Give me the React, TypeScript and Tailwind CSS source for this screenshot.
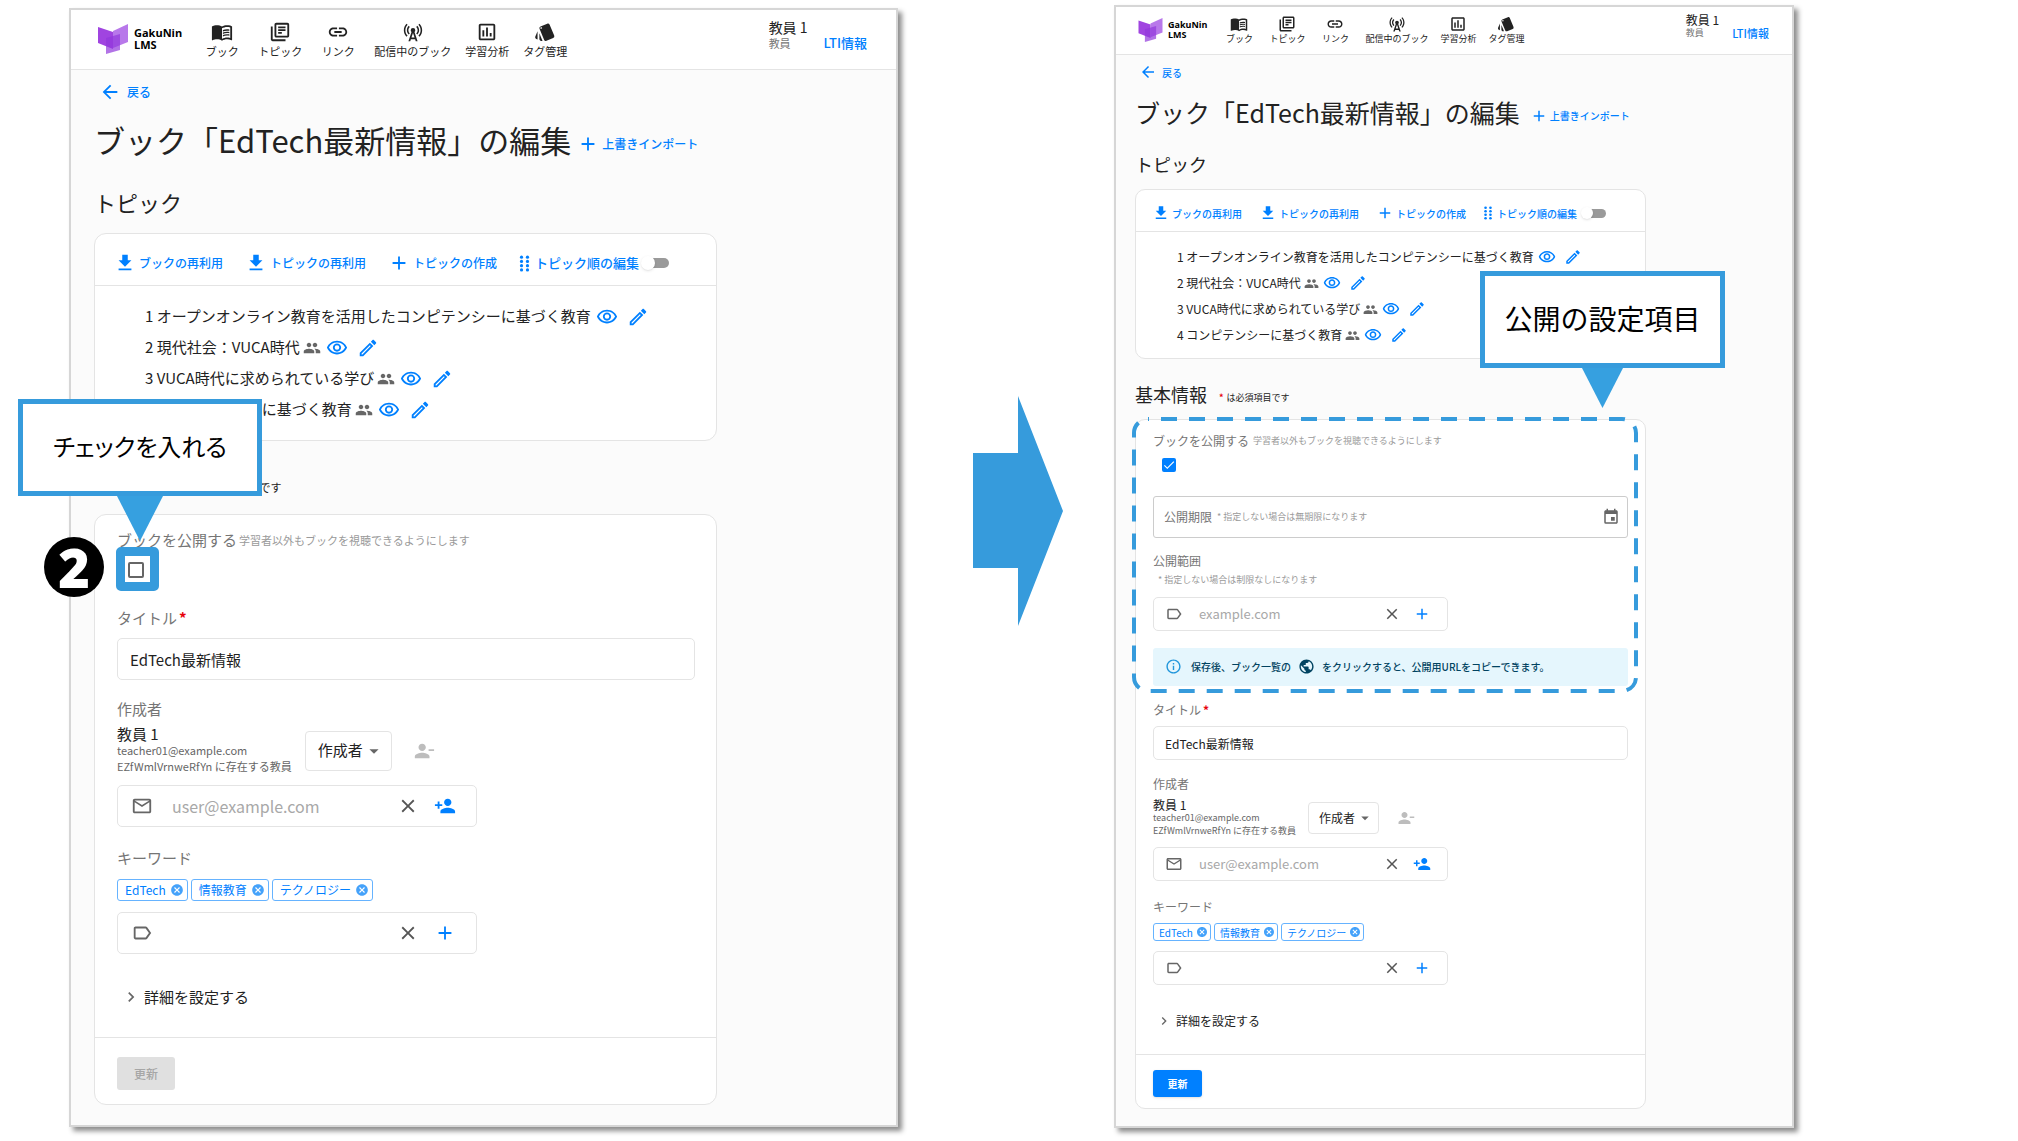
import { useId, type ComponentType, type ReactNode } from 'react';
import clsx from 'clsx';
import {
    MdAdd,
    MdArrowBack,
    MdArrowDropDown,
    MdCancel,
    MdCellTower,
    MdCheck,
    MdChevronRight,
    MdClose,
    MdDownload,
    MdEvent,
    MdInfoOutline,
    MdLabelOutline,
    MdLink,
    MdMailOutline,
    MdMenuBook,
    MdOutlineAssessment,
    MdOutlineEdit,
    MdOutlineLibraryBooks,
    MdOutlineVisibility,
    MdPeople,
    MdPersonAdd,
    MdPersonRemove,
    MdPublic,
    MdStyle,
} from 'react-icons/md';

type IconType = ComponentType<{ className?: string }>;
type Sized = { sm?: boolean };

const NAV: { label: string; icon: IconType }[] = [
    { label: 'ブック', icon: MdMenuBook },
    { label: 'トピック', icon: MdOutlineLibraryBooks },
    { label: 'リンク', icon: MdLink },
    { label: '配信中のブック', icon: MdCellTower },
    { label: '学習分析', icon: MdOutlineAssessment },
    { label: 'タグ管理', icon: MdStyle },
];

const TOPICS = [
    { title: '1 オープンオンライン教育を活用したコンピテンシーに基づく教育', shared: false },
    { title: '2 現代社会：VUCA時代', shared: true },
    { title: '3 VUCA時代に求められている学び', shared: true },
    { title: '4 コンピテンシーに基づく教育', shared: true },
];

const KEYWORDS = ['EdTech', '情報教育', 'テクノロジー'];

function Logo({ sm }: Sized) {
    return (
        <a href="#" className={clsx('flex items-center', sm ? 'gap-[5px]' : 'gap-[6px]')}>
            <svg viewBox="0 0 30 30" className={sm ? 'w-[25px] h-[24px]' : 'w-[30px] h-[30px]'} aria-hidden="true">
                <path d="M30 0 L15 7 V24 L30 18 Z" fill="#b878ea" />
                <path d="M0 3 L15 8 V25 L0 19 Z" fill="#a044e0" />
                <path d="M8 14 L22 10 V26 L8 30 Z" fill="#9238dc" fillOpacity="0.7" />
            </svg>
            <span
                className={clsx(
                    "font-['Open_Sans',sans-serif] font-bold text-black",
                    sm ? 'text-[9px] leading-[10px]' : 'text-[11px] leading-[12px]',
                )}
            >
                GakuNin
                <br />
                LMS
            </span>
        </a>
    );
}

function Header({ sm }: Sized) {
    return (
        <header
            className={clsx(
                'flex bg-white border-b border-[#e4e4e4]',
                sm ? 'h-[48px] pl-[22px] pr-[23px] pb-px' : 'h-[60px] pl-[27px] pr-[29px] pb-px',
            )}
        >
            <Logo sm={sm} />
            <nav className={clsx('flex items-center', sm ? 'ml-2' : 'ml-[11px]')}>
                {NAV.map(({ label, icon: Icon }) => (
                    <a
                        key={label}
                        href="#"
                        className={clsx(
                            'flex flex-col items-center whitespace-nowrap',
                            sm
                                ? 'min-w-[48px] px-[6px] text-[9px] leading-[12px]'
                                : 'min-w-[58px] px-[7px] gap-px text-[11px] leading-[14px]',
                        )}
                    >
                        <Icon className={sm ? 'size-[18px]' : 'size-[22px]'} />
                        {label}
                    </a>
                ))}
            </nav>
            <div className={clsx('ml-auto flex items-start', sm ? 'pt-[6px]' : 'pt-2')}>
                <div className={clsx('flex items-end', sm ? 'gap-[13px]' : 'gap-4')}>
                    <div>
                        <p className={sm ? 'text-[12px] leading-[14px]' : 'text-[14px] leading-[18px]'}>教員 1</p>
                        <p className={clsx('text-[#777]', sm ? 'text-[9px] leading-[12px]' : 'text-[11px] leading-[14px]')}>教員</p>
                    </div>
                    <a
                        href="#"
                        className={clsx(
                            'font-medium text-[#0080ff]',
                            sm ? 'text-[11px] leading-[12px]' : 'text-[13px] leading-[14px]',
                        )}
                    >
                        LTI情報
                    </a>
                </div>
            </div>
        </header>
    );
}

function TextButton({ sm, icon: Icon, children }: Sized & { icon: IconType; children: ReactNode }) {
    return (
        <button
            type="button"
            className={clsx(
                'flex items-center font-medium text-[#0080ff] whitespace-nowrap',
                sm ? 'gap-[2px] text-[10px]' : 'gap-[3px] text-[12px]',
            )}
        >
            <Icon className={sm ? 'size-[18px]' : 'size-[22px]'} />
            {children}
        </button>
    );
}

function GripIcon({ className }: { className?: string }) {
    return (
        <svg viewBox="0 0 10 16" fill="currentColor" className={className} aria-hidden="true">
            {[2, 6, 10, 14].map((y) => (
                <g key={y}>
                    <circle cx="2.2" cy={y} r="1.5" />
                    <circle cx="7.8" cy={y} r="1.5" />
                </g>
            ))}
        </svg>
    );
}

function SectionTitle({ sm, children }: Sized & { children: ReactNode }) {
    return (
        <h2 className={clsx('flex items-center', sm ? 'text-[18px] leading-[26px]' : 'text-[22px] leading-[32px]')}>
            {children}
        </h2>
    );
}

function Card({ sm, children }: Sized & { children: ReactNode }) {
    return (
        <div
            className={clsx(
                'bg-white border border-[#e4e4e4]',
                sm ? 'mt-3 max-w-[511px] rounded-[10px]' : 'mt-[15px] max-w-[623px] rounded-[12px]',
            )}
        >
            {children}
        </div>
    );
}

function TopicCard({ sm }: Sized) {
    return (
        <Card sm={sm}>
            <div
                className={clsx(
                    'flex items-center border-b border-[#e4e4e4]',
                    sm ? 'h-[42px] pl-4 pt-[5px] gap-[17px]' : 'h-[52px] pl-[19px] pt-[7px] gap-[22px]',
                )}
            >
                <TextButton sm={sm} icon={MdDownload}>ブックの再利用</TextButton>
                <TextButton sm={sm} icon={MdDownload}>トピックの再利用</TextButton>
                <TextButton sm={sm} icon={MdAdd}>トピックの作成</TextButton>
                <label
                    className={clsx(
                        'flex items-center font-medium text-[#0080ff] whitespace-nowrap',
                        sm ? 'gap-1 text-[10px]' : 'gap-[5px] text-[13px]',
                    )}
                >
                    <GripIcon className={sm ? 'w-[10px] h-[14px]' : 'w-[11px] h-[17px]'} />
                    トピック順の編集
                    <input
                        type="checkbox"
                        role="switch"
                        className={clsx(
                            'appearance-none flex items-center rounded-full bg-[#9a9a9a] before:block before:rounded-full before:bg-white before:shadow before:-ml-1',
                            sm
                                ? 'ml-1 w-[21px] h-[9px] before:size-[12px]'
                                : 'ml-px w-[24px] h-[10px] before:size-[14px]',
                        )}
                    />
                </label>
            </div>
            <ol className={sm ? 'pt-3 pb-[10px] pl-[41px]' : 'pt-[15px] pb-[15px] pl-[50px]'}>
                {TOPICS.map(({ title, shared }) => (
                    <li
                        key={title}
                        className={clsx(
                            'flex items-center whitespace-nowrap',
                            sm ? 'h-[26px] gap-2 text-[12px]' : 'h-[31px] gap-[9px] text-[15px]',
                        )}
                    >
                        <span className="flex items-center gap-[3px]">
                            {title}
                            {shared && <MdPeople className={clsx('text-[#666]', sm ? 'size-[15px]' : 'size-[18px]')} />}
                        </span>
                        <button type="button" aria-label="表示" className="-ml-1 text-[#0080ff]">
                            <MdOutlineVisibility className={sm ? 'size-[18px]' : 'size-[22px]'} />
                        </button>
                        <button type="button" aria-label="編集" className="text-[#0080ff]">
                            <MdOutlineEdit className={sm ? 'size-[18px]' : 'size-[22px]'} />
                        </button>
                    </li>
                ))}
            </ol>
        </Card>
    );
}

function FieldLabel({ sm, htmlFor, className, children }: Sized & { htmlFor?: string; className?: string; children: ReactNode }) {
    return (
        <label
            htmlFor={htmlFor}
            className={clsx('flex items-center text-[#757575]', sm ? 'text-[12px] leading-[16px]' : 'text-[15px] leading-[20px]', className)}
        >
            {children}
        </label>
    );
}

function Note({ sm, className, children }: Sized & { className?: string; children: ReactNode }) {
    return (
        <span className={clsx('text-[#9a9a9a]', sm ? 'text-[9px] leading-[12px]' : 'text-[11px] leading-[14px]', className)}>
            {children}
        </span>
    );
}

type EntryProps = Sized & {
    id: string;
    icon: IconType;
    action: IconType;
    placeholder?: string;
    className?: string;
};

// icon + input + clear / add buttons
function EntryField({ sm, id, icon: Icon, action: Action, placeholder, className }: EntryProps) {
    const iconSize = sm ? 'size-[18px]' : 'size-[22px]';
    return (
        <div
            className={clsx(
                'flex items-center border border-[#e4e4e4] rounded-[5px]',
                sm ? 'w-[295px] h-[34px] pl-[11px] pr-4' : 'w-[360px] h-[42px] pl-[13px] pr-[20px]',
                className,
            )}
        >
            <Icon className={clsx('shrink-0 text-[#666]', iconSize)} />
            <input
                id={id}
                type="text"
                placeholder={placeholder}
                className={clsx(
                    'flex-1 min-w-0 outline-none placeholder:text-[#a8a8a8]',
                    sm ? 'ml-4 text-[13px]' : 'ml-[19px] text-[16px]',
                )}
            />
            <button type="button" aria-label="クリア" className="text-[#555]">
                <MdClose className={iconSize} />
            </button>
            <button type="button" aria-label="追加" className={clsx('text-[#0080ff]', sm ? 'ml-3' : 'ml-[15px]')}>
                <Action className={iconSize} />
            </button>
        </div>
    );
}

function Callout({ className, children }: { className: string; children: ReactNode }) {
    return (
        <div
            className={clsx(
                'absolute z-20 flex items-center justify-center h-[97px] pb-[3px] border-[5px] border-[#369bdc] bg-white text-black whitespace-nowrap',
                className,
            )}
        >
            {children}
        </div>
    );
}

function Pointer({ className }: { className: string }) {
    return (
        <svg viewBox="0 0 46 46" preserveAspectRatio="none" className={clsx('absolute z-10 overflow-visible', className)} aria-hidden="true">
            <path d="M0 0 H46 L23 46 Z" fill="#36a0e0" />
        </svg>
    );
}

function CheckNotes() {
    return (
        <>
            <Callout className="-left-[99px] -top-[131px] w-[244px] text-[24px] [font-feature-settings:'palt']">チェックを入れる</Callout>
            <Pointer className="left-0 -top-[34px] w-[46px] h-[45px]" />
            <div className="absolute z-10 -left-px top-[17px] w-[43px] h-[44px] rounded-[5px] border-[9px] border-[#369bdc]" />
            <div className="absolute z-10 -left-[73px] top-[7px] flex items-center justify-center size-[60px] rounded-full bg-black font-['Open_Sans',sans-serif] text-[54px] leading-[60px] font-extrabold text-white">
                2
            </div>
        </>
    );
}

function PublishNotes() {
    return (
        <>
            <Callout className="left-[327px] -top-[162px] w-[245px] text-[28px]">公開の設定項目</Callout>
            <Pointer className="left-[429px] -top-[65px] w-[41px] h-[40px]" />
            <svg viewBox="0 0 506 276" fill="none" className="absolute -left-[21px] -top-[16px] w-[506px] h-[276px]" aria-hidden="true">
                <rect
                    x="2"
                    y="2"
                    width="502"
                    height="272"
                    rx="14"
                    stroke="#369bdc"
                    strokeWidth="4"
                    strokeDasharray="16 12"
                    strokeDashoffset="15"
                />
            </svg>
        </>
    );
}

function PublishCheck({ sm }: Sized) {
    const id = useId();
    return (
        <>
            <FieldLabel sm={sm} htmlFor={id}>
                ブックを公開する
                <Note sm={sm} className={sm ? 'ml-1' : 'ml-[2px]'}>学習者以外もブックを視聴できるようにします</Note>
            </FieldLabel>
            <div className={clsx('relative', sm ? 'mt-[9px] ml-[9px] size-[14px]' : 'mt-3 ml-[11px] size-[16px]')}>
                <input
                    id={id}
                    type="checkbox"
                    defaultChecked={sm}
                    className="peer appearance-none block size-full rounded-[2px] border-2 border-[#666] checked:border-[#0080ff] checked:bg-[#0080ff]"
                />
                <MdCheck className="absolute inset-0 size-full text-white opacity-0 peer-checked:opacity-100 pointer-events-none" />
            </div>
        </>
    );
}

function PublishSettings() {
    const id = useId();
    return (
        <>
            <div className="mt-6 flex items-center h-[42px] px-[10px] border border-[#ccc] rounded-[3px]">
                <FieldLabel sm htmlFor={`${id}-limit`}>
                    公開期限
                    <Note sm className="ml-[5px]">* 指定しない場合は無期限になります</Note>
                </FieldLabel>
                <input id={`${id}-limit`} type="text" className="flex-1 min-w-0 text-[12px] outline-none" />
                <button type="button" aria-label="日付を選択" className="-mr-[3px] text-[#666]">
                    <MdEvent className="size-[18px]" />
                </button>
            </div>
            <FieldLabel sm htmlFor={`${id}-domain`} className="mt-[15px]">公開範囲</FieldLabel>
            <Note sm className="block mt-[5px] ml-[5px]">* 指定しない場合は制限なしになります</Note>
            <EntryField sm id={`${id}-domain`} icon={MdLabelOutline} action={MdAdd} placeholder="example.com" className="mt-[11px]" />
            <div className="mt-[17px] flex items-center h-[38px] pl-3 pb-[2px] rounded-[3px] bg-[#e5f6fd] text-[10px] font-medium text-[#014361] whitespace-nowrap">
                <MdInfoOutline className="size-[17px] text-[#2196db]" />
                <span className="ml-[9px]">保存後、ブック一覧の</span>
                <MdPublic className="mx-[7px] size-[17px]" />
                <span>をクリックすると、公開用URLをコピーできます。</span>
            </div>
        </>
    );
}

function BookForm({ sm }: Sized) {
    const id = useId();
    return (
        <Card sm={sm}>
            <form>
                <div className={clsx('border-b border-[#e4e4e4]', sm ? 'px-[17px] pt-[13px] pb-[25px]' : 'pl-[22px] pr-[21px] pt-[15px] pb-[30px]')}>
                    <div className="relative">
                        <PublishCheck sm={sm} />
                        {sm && <PublishSettings />}
                        {sm ? <PublishNotes /> : <CheckNotes />}
                    </div>

                    <FieldLabel sm={sm} htmlFor={`${id}-title`} className={sm ? 'mt-4' : 'mt-[30px]'}>
                        タイトル
                        <span className="ml-[2px] font-bold text-red-600">*</span>
                    </FieldLabel>
                    <input
                        id={`${id}-title`}
                        type="text"
                        defaultValue="EdTech最新情報"
                        className={clsx(
                            'block w-full border border-[#e4e4e4] rounded-[5px] outline-none',
                            sm ? 'mt-2 h-[34px] px-[11px] text-[12px]' : 'mt-[10px] h-[42px] px-3 text-[15px]',
                        )}
                    />

                    <FieldLabel sm={sm} htmlFor={`${id}-author`} className={sm ? 'mt-4' : 'mt-[19px]'}>作成者</FieldLabel>
                    <div className={clsx('flex items-center whitespace-nowrap', sm ? 'mt-[6px]' : 'mt-[7px]')}>
                        <div className={clsx('text-[#666]', sm ? 'pb-px text-[9px] leading-[13px]' : 'pb-px text-[11px] leading-[16px]')}>
                            <p className={clsx('text-[#222]', sm ? 'text-[12px]' : 'text-[15px]')}>教員 1</p>
                            <p>teacher01@example.com</p>
                            <p>EZfWmlVrnweRfYn に存在する教員</p>
                        </div>
                        <div className={clsx('relative', sm ? 'ml-3' : 'ml-[13px]')}>
                            <select
                                aria-label="役割"
                                className={clsx(
                                    'appearance-none block border border-[#e4e4e4] rounded-[4px] bg-white',
                                    sm ? 'w-[71px] h-[32px] pl-[10px] text-[12px]' : 'w-[87px] h-[40px] pl-3 text-[15px]',
                                )}
                            >
                                <option>作成者</option>
                            </select>
                            <MdArrowDropDown
                                className={clsx(
                                    'absolute inset-y-0 my-auto text-[#666] pointer-events-none',
                                    sm ? 'right-[5px] size-[18px]' : 'right-[7px] size-[22px]',
                                )}
                            />
                        </div>
                        <button type="button" disabled aria-label="削除" className={clsx('text-[#bdbdbd]', sm ? 'ml-[18px]' : 'ml-[21px]')}>
                            <MdPersonRemove className={sm ? 'size-[18px]' : 'size-[22px]'} />
                        </button>
                    </div>
                    <EntryField
                        sm={sm}
                        id={`${id}-author`}
                        icon={MdMailOutline}
                        action={MdPersonAdd}
                        placeholder="user@example.com"
                        className={sm ? 'mt-[9px]' : 'mt-[10px]'}
                    />

                    <FieldLabel sm={sm} htmlFor={`${id}-keyword`} className={sm ? 'mt-[18px]' : 'mt-[21px]'}>キーワード</FieldLabel>
                    <ul className={clsx('flex', sm ? 'mt-2 gap-[3px]' : 'mt-[11px] gap-[3px]')}>
                        {KEYWORDS.map((keyword) => (
                            <li
                                key={keyword}
                                className={clsx(
                                    'flex items-center border border-[#66b3ff] rounded-[3px] text-[#0080ff]',
                                    sm ? 'h-[18px] pl-[5px] pr-[2px] gap-[3px] text-[10px]' : 'h-[22px] pl-[7px] pr-[3px] gap-1 text-[12px]',
                                )}
                            >
                                {keyword}
                                <button type="button" aria-label={`${keyword}を削除`} className="text-[#45a2fa]">
                                    <MdCancel className={sm ? 'size-[12px]' : 'size-[14px]'} />
                                </button>
                            </li>
                        ))}
                    </ul>
                    <EntryField
                        sm={sm}
                        id={`${id}-keyword`}
                        icon={MdLabelOutline}
                        action={MdAdd}
                        className={sm ? 'mt-[10px]' : 'mt-[11px]'}
                    />

                    <button
                        type="button"
                        className={clsx(
                            'flex items-center',
                            sm ? 'mt-7 ml-[3px] gap-[4px] text-[12px] leading-[16px]' : 'mt-[33px] ml-1 gap-[3px] text-[15px] leading-[20px]',
                        )}
                    >
                        <MdChevronRight className={clsx('text-[#666]', sm ? 'size-[16px]' : 'size-[20px]')} />
                        詳細を設定する
                    </button>
                </div>
                <div className={sm ? 'px-[17px] pt-[15px] pb-[11px]' : 'px-[22px] pt-[19px] pb-[14px]'}>
                    <button
                        type="button"
                        disabled={!sm}
                        className={clsx(
                            'block rounded-[3px]',
                            sm
                                ? 'w-[49px] h-[27px] bg-[#0080ff] text-[10px] font-bold text-white shadow'
                                : 'w-[58px] h-[33px] bg-[#e0e0e0] text-[12px] font-medium text-[#a6a6a6]',
                        )}
                    >
                        更新
                    </button>
                </div>
            </form>
        </Card>
    );
}

function EditPage({ sm }: Sized) {
    return (
        <section
            className={clsx(
                'border-2 border-[#d6d6d6] bg-[#fbfbfb] shadow-[4px_4px_5px_rgba(0,0,0,0.45)]',
                sm ? 'mt-[5px]' : 'mt-2',
            )}
        >
            <Header sm={sm} />
            <div className={sm ? 'pt-2 pl-[19px] pb-[17px]' : 'pt-[11px] pl-[23px] pb-5'}>
                <a
                    href="#"
                    className={clsx(
                        'flex items-center font-medium text-[#0080ff]',
                        sm ? 'ml-1 h-[18px] gap-[5px] text-[10px]' : 'ml-[5px] h-[22px] gap-[6px] text-[12px]',
                    )}
                >
                    <MdArrowBack className={sm ? 'size-[18px]' : 'size-[22px]'} />
                    戻る
                </a>
                <div className={clsx('flex items-center whitespace-nowrap', sm ? 'mt-3 gap-[10px]' : 'mt-[13px] gap-[6px]')}>
                    <h1 className={sm ? 'text-[25px] leading-[38px]' : 'text-[31px] leading-[48px]'}>
                        ブック「EdTech最新情報」の編集
                    </h1>
                    <div className="pt-[7px]">
                        <TextButton sm={sm} icon={MdAdd}>上書きインポート</TextButton>
                    </div>
                </div>
                <div className={sm ? 'mt-5' : 'mt-[22px]'}>
                    <SectionTitle sm={sm}>トピック</SectionTitle>
                </div>
                <TopicCard sm={sm} />
                <div className={sm ? 'mt-[22px]' : 'mt-[26px]'}>
                    <SectionTitle sm={sm}>
                        基本情報
                        <span className={clsx('pt-[7px]', sm ? 'ml-3 text-[9px] leading-[12px]' : 'ml-[14px] text-[11px] leading-[14px]')}>
                            <span className="mr-[3px] font-bold text-red-600">*</span>
                            は必須項目です
                        </span>
                    </SectionTitle>
                </div>
                <BookForm sm={sm} />
            </div>
        </section>
    );
}

export default function App() {
    return (
        <main
            lang="ja"
            className="grid grid-cols-[829fr_216px_680fr] items-start pl-[69px] pr-[224px] pb-3 bg-white font-['Noto_Sans_CJK_JP',sans-serif] text-[#222]"
        >
            <EditPage />
            <svg viewBox="0 0 90 230" className="mt-[396px] ml-[75px] w-[90px] h-[230px]" aria-hidden="true">
                <path d="M0 57 H45 V0 L90 115 L45 230 V172 H0 Z" fill="#369bdc" />
            </svg>
            <EditPage sm />
        </main>
    );
}
